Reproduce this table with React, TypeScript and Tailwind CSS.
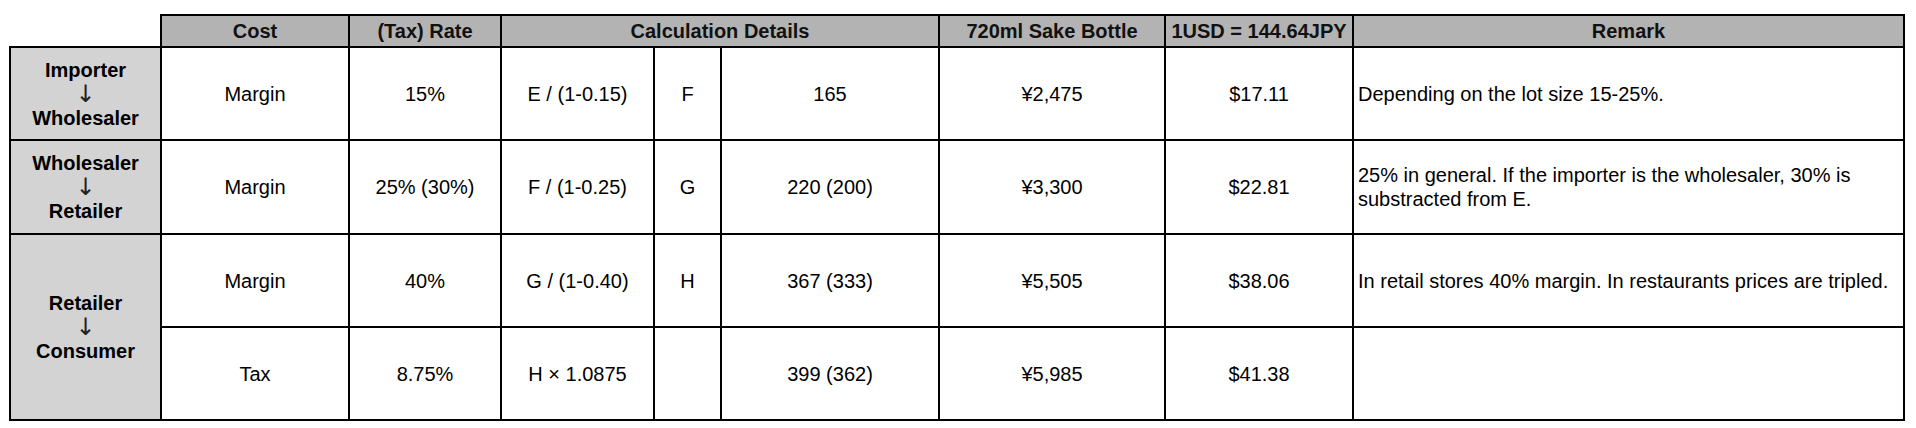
import React from 'react';

const cell = 'border-2 border-black text-center align-middle';
const head = 'border-2 border-black bg-[#b3b3b3] text-center align-middle font-bold text-[#111]';
const label = 'border-2 border-black bg-[#d3d3d3] text-center align-middle font-bold leading-[24px]';

const rows = [
  { cost: 'Margin', rate: '15%', calc: 'E / (1-0.15)', letter: 'F', val: '165', yen: '¥2,475', usd: '$17.11', remark: 'Depending on the lot size 15-25%.' },
  { cost: 'Margin', rate: '25% (30%)', calc: 'F / (1-0.25)', letter: 'G', val: '220 (200)', yen: '¥3,300', usd: '$22.81', remark: '25% in general. If the importer is the wholesaler, 30% is substracted from E.' },
  { cost: 'Margin', rate: '40%', calc: 'G / (1-0.40)', letter: 'H', val: '367 (333)', yen: '¥5,505', usd: '$38.06', remark: 'In retail stores 40% margin. In restaurants prices are tripled.' },
  { cost: 'Tax', rate: '8.75%', calc: 'H × 1.0875', letter: '', val: '399 (362)', yen: '¥5,985', usd: '$41.38', remark: '' },
];

const labels: Record<number, { text: string[]; span: number }> = {
  0: { text: ['Importer', 'Wholesaler'], span: 1 },
  1: { text: ['Wholesaler', 'Retailer'], span: 1 },
  2: { text: ['Retailer', 'Consumer'], span: 2 },
};

export default function App() {
  return (
    <div className="w-[1916px] h-[428px] bg-white pl-[9px] pt-[14px] font-['Liberation_Sans',Arial,sans-serif] text-[20px] text-black">
      <table className="table-fixed border-collapse w-[1896px]">
        <colgroup>
          <col className="w-[151px]" />
          <col className="w-[188px]" />
          <col className="w-[152px]" />
          <col className="w-[153px]" />
          <col className="w-[67px]" />
          <col className="w-[218px]" />
          <col className="w-[226px]" />
          <col className="w-[188px]" />
          <col className="w-[551px]" />
        </colgroup>
        <thead>
          <tr className="h-[32px]">
            <th className="border-0 p-0" />
            <th className={head}>Cost</th>
            <th className={head}>(Tax) Rate</th>
            <th className={head} colSpan={3}>Calculation Details</th>
            <th className={head}>720ml Sake Bottle</th>
            <th className={head}>1USD = 144.64JPY</th>
            <th className={head}>Remark</th>
          </tr>
        </thead>
        <tbody>
          {rows.map((r, i) => (
            <tr key={i} className={i === 1 ? 'h-[94px]' : 'h-[93px]'}>
              {labels[i] && (
                <td className={label} rowSpan={labels[i].span}>
                  <div>{labels[i].text[0]}</div>
                  <div className="font-normal font-['DejaVu_Sans',sans-serif] text-[24px] text-[#222]">↓</div>
                  <div>{labels[i].text[1]}</div>
                </td>
              )}
              <td className={cell}>{r.cost}</td>
              <td className={cell}>{r.rate}</td>
              <td className={cell}>{r.calc}</td>
              <td className={cell}>{r.letter}</td>
              <td className={cell}>{r.val}</td>
              <td className={cell}>{r.yen}</td>
              <td className={cell}>{r.usd}</td>
              <td className="border-2 border-black text-left align-middle pl-[4px] pr-2 leading-[24px]">{r.remark}</td>
            </tr>
          ))}
        </tbody>
      </table>
    </div>
  );
}
